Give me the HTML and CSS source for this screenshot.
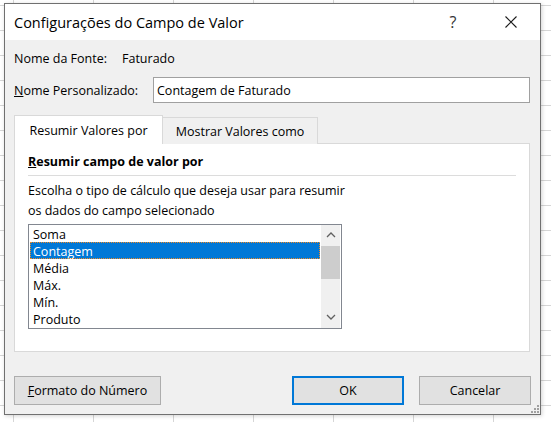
FILE: index.html
```html
<!DOCTYPE html>
<html lang="pt-BR">
<head>
  <meta charset="UTF-8">
  <title>Configurações do Campo de Valor</title>
  <link rel="stylesheet" href="styles.css">
</head>
<body>
  <div class="dialog">
    <div class="titlebar">
      <span class="title">Configurações do Campo de Valor</span>
      <span class="help">?</span>
      <span class="close">
        <svg width="12" height="12" viewBox="0 0 12 12"><path d="M0.5 0.5 L11.5 11.5 M11.5 0.5 L0.5 11.5" stroke="#1a1a1a" stroke-width="1.1" fill="none"/></svg>
      </span>
    </div>

    <div class="content">
      <div class="row source">
        <span class="label source-label">Nome da Fonte:</span>
        <span>Faturado</span>
      </div>
      <div class="row custom">
        <label class="label custom-label" for="custom-name"><u>N</u>ome Personalizado:</label>
        <input id="custom-name" class="textbox" type="text" value="Contagem de Faturado">
      </div>

      <div class="tabs">
        <div class="tab active">Resumir Valores por</div>
        <div class="tab">Mostrar Valores como</div>
      </div>
      <div class="panel">
        <div class="group-title"><u>R</u>esumir campo de valor por</div>
        <div class="separator"></div>
        <p class="hint">Escolha o tipo de cálculo que deseja usar para resumir<br>os dados do campo selecionado</p>
        <div class="listbox">
          <ul class="items">
            <li>Soma</li>
            <li class="selected">Contagem</li>
            <li>Média</li>
            <li>Máx.</li>
            <li>Mín.</li>
            <li>Produto</li>
          </ul>
          <div class="scrollbar">
            <svg class="arrow" width="10" height="6" viewBox="0 0 10 6"><path d="M1 5 L5 1 L9 5" stroke="#606060" stroke-width="1.3" fill="none"/></svg>
            <div class="thumb"></div>
            <svg class="arrow down" width="10" height="6" viewBox="0 0 10 6"><path d="M1 1 L5 5 L9 1" stroke="#606060" stroke-width="1.3" fill="none"/></svg>
          </div>
        </div>
      </div>

      <div class="buttons">
        <button class="btn number-format"><u>F</u>ormato do Número</button>
        <button class="btn ok">OK</button>
        <button class="btn">Cancelar</button>
      </div>
    </div>

    <svg class="grip" width="10" height="10" viewBox="0 0 10 10">
      <rect x="8" y="2" width="2" height="2" fill="#a0a0a0"/>
      <rect x="5" y="5" width="2" height="2" fill="#a0a0a0"/>
      <rect x="8" y="5" width="2" height="2" fill="#a0a0a0"/>
      <rect x="2" y="8" width="2" height="2" fill="#a0a0a0"/>
      <rect x="5" y="8" width="2" height="2" fill="#a0a0a0"/>
      <rect x="8" y="8" width="2" height="2" fill="#a0a0a0"/>
    </svg>
  </div>
</body>
</html>
```

FILE: styles.css
```css
body {
  margin: 0;
  width: 551px;
  height: 422px;
  overflow: hidden;
  background-color: #fff;
  background-image:
    linear-gradient(to right, #d6d6d6 1px, transparent 1px),
    linear-gradient(to bottom, #d6d6d6 1px, transparent 1px);
  background-size: 80px 25px;
  background-position: 13px 5px;
  font-family: 'Open Sans', 'Noto Sans', sans-serif;
  font-size: 12.5px;
  color: #000;
}

.dialog {
  position: relative;
  box-sizing: border-box;
  width: 537px;
  height: 412px;
  margin: 3px 0 0 4px;
  border: 1px solid #707070;
  background-color: #f0f0f0;
  box-shadow: 1px 1px 4px rgba(0, 0, 0, 0.18);
}

.titlebar {
  display: flex;
  align-items: center;
  height: 36px;
  padding: 0 14px 0 9px;
  background-color: #fff;
}

.title {
  flex: 1;
  font-size: 14.5px;
  color: #000;
}

.help {
  width: 30px;
  text-align: center;
  font-size: 16px;
  color: #333;
}

.close {
  display: flex;
  justify-content: center;
  width: 30px;
  margin-left: 28px;
}

.content {
  padding: 0 9px;
}

.row {
  display: flex;
  align-items: center;
}

.source {
  height: 18px;
  margin-top: 9px;
}

.source-label {
  width: 108px;
}

.custom {
  height: 26px;
  margin-top: 10px;
}

.custom-label {
  width: 139px;
}

.textbox {
  box-sizing: border-box;
  width: 377px;
  height: 26px;
  padding: 0 3px;
  border: 1px solid #a0a0a0;
  background: #fff;
  font-family: inherit;
  font-size: 12.5px;
  color: #000;
  outline: none;
}

.tabs {
  display: flex;
  align-items: flex-end;
  height: 29px;
  margin-top: 12px;
  position: relative;
  z-index: 1;
}

.tab {
  box-sizing: border-box;
  height: 27px;
  padding-top: 5px;
  text-align: center;
  border: 1px solid #d9d9d9;
  border-bottom: none;
  background-color: #f0f0f0;
  width: 156px;
  margin-left: -1px;
}

.tab.active {
  height: 29px;
  width: 149px;
  margin-left: 0;
  padding-top: 6px;
  background-color: #fff;
  position: relative;
  z-index: 2;
}

.panel {
  box-sizing: border-box;
  width: 516px;
  height: 209px;
  margin-top: -1px;
  padding: 9px 13px 0 13px;
  border: 1px solid #d9d9d9;
  background-color: #fff;
}

.group-title {
  font-weight: bold;
  line-height: 18px;
}

.separator {
  height: 1px;
  margin-top: 4px;
  background-color: #dcdcdc;
}

.hint {
  margin: 5px 0 0 0;
  line-height: 20px;
}

.listbox {
  display: flex;
  box-sizing: border-box;
  width: 314px;
  height: 105px;
  margin-top: 3px;
  border: 1px solid #828790;
  background: #fff;
}

.items {
  flex: 1;
  list-style: none;
  margin: 0;
  padding: 0 1px 0 1px;
}

.items li {
  box-sizing: border-box;
  height: 17px;
  line-height: 17px;
  padding: 1px 0 0 3px;
}

.items li.selected {
  background-color: #0078d7;
  color: #fff;
  outline: 1px dotted #f08a24;
  outline-offset: -1px;
}

.scrollbar {
  display: flex;
  flex-direction: column;
  align-items: center;
  width: 19px;
  margin-right: 1px;
  background-color: #f0f0f0;
}

.arrow {
  margin-top: 7px;
}

.arrow.down {
  margin-top: auto;
  margin-bottom: 8px;
}

.thumb {
  width: 19px;
  height: 33px;
  margin-top: 8px;
  background-color: #cdcdcd;
}

.buttons {
  display: flex;
  margin-top: 24px;
}

.btn {
  box-sizing: border-box;
  height: 29px;
  width: 112px;
  border: 1px solid #adadad;
  background-color: #e1e1e1;
  font-family: inherit;
  font-size: 12.5px;
  color: #000;
  padding: 0;
}

.number-format {
  width: 147px;
  margin-right: auto;
}

.ok {
  border: 2px solid #0078d7;
  margin-right: 15px;
}

.grip {
  position: absolute;
  right: 1px;
  bottom: 1px;
}
```
